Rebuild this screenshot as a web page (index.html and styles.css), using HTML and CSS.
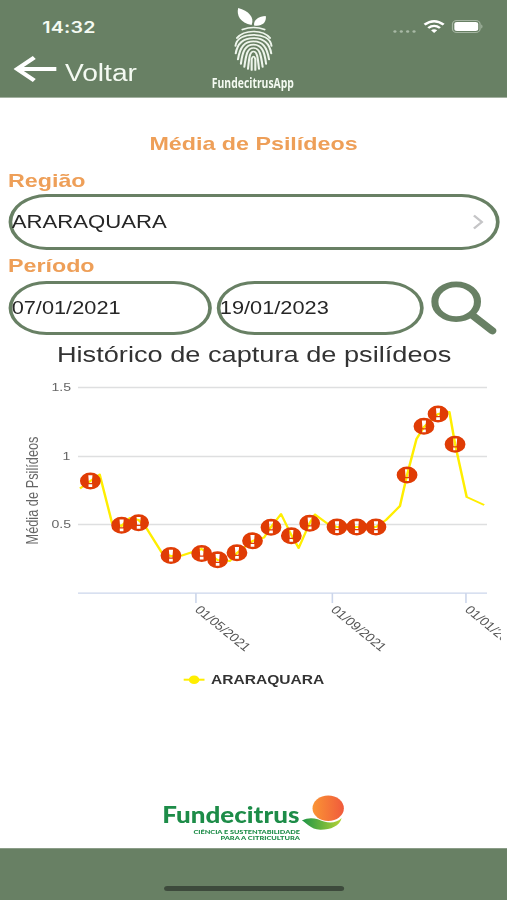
FILE: index.html
```
<!DOCTYPE html>
<html lang="pt-BR">
<head>
    <meta charset="UTF-8">
    <meta name="viewport" content="width=device-width, initial-scale=1.0">
    <title>Média de Psilídeos</title>
    <link rel="stylesheet" href="styles.css">
</head>
<body>
    <div class="screen">
        <header>
            <div class="header-left">
                <div class="time">14:32</div>
                <a href="#" class="back-button">
                    <svg width="36" height="28" viewBox="0 0 36 28">
                        <path d="M35 14H3M17 2.5L3 14l14 11.5" fill="none" stroke="#fff" stroke-width="3.8"/>
                    </svg>
                    <span>Voltar</span>
                </a>
            </div>
            <div class="app-logo">
                <svg width="72" height="89" viewBox="-1 0 72 89">
                    <g fill="#fff">
                        <path d="M33.5 17C24 15 21 7 22.500 0C31 3 36 9 33.500 17Z"/>
                        <path d="M35.500 17.500C35 12 39 8 45 8C46 14 42 19 35.500 17.500Z"/>
                    </g>
                    <g fill="none" stroke="#eef5ec" stroke-width="1.700" stroke-linecap="round">
                        <path d="M26 21.500Q35 17.500 44 21.500"/>
                        <path d="M21.500 30Q26 23.500 35 23.500T48.500 30"/>
                        <path d="M20.300 38C21 30 28 26.800 35 26.800S49 30 49.700 38"/>
                        <path d="M20.500 45.500C22 34 28 30.100 35 30.100S48 34 49.500 45.500"/>
                        <path d="M22.300 51.500C24 38 28 33.400 35 33.400S46 38 47.700 51.500"/>
                        <path d="M24.700 56C26 43 28.500 36.700 35 36.700S44 43 45.300 56"/>
                        <path d="M27.500 59C29 46 30 40 35 40S41 46 42.500 59"/>
                        <path d="M30.500 61C31.500 49 32 43.500 35 43.500S38.500 49 39.500 61"/>
                        <path d="M33.500 62V51Q35 46 36.500 51V62"/>
                    </g>
                    <text x="1" y="80.500" textLength="67" lengthAdjust="spacingAndGlyphs" class="app-name">FundecitrusApp</text>
                </svg>
            </div>
            <div class="status-icons">
                <svg width="74" height="18" viewBox="0 0 74 18">
                    <g fill="#a9b9a6">
                        <circle cx="2.500" cy="13.500" r="1.300"/>
                        <circle cx="7.700" cy="13.500" r="1.300"/>
                        <circle cx="12.900" cy="13.500" r="1.300"/>
                        <circle cx="18.100" cy="13.500" r="1.300"/>
                    </g>
                    <g fill="none" stroke="#fff" stroke-width="2.300">
                        <path d="M26.700 6.700Q34.500 -.2 42.300 6.700"/>
                        <path d="M29.700 10Q34.500 5.800 39.300 10"/>
                    </g>
                    <path d="M32 12.200Q34.500 10.200 37 12.200L34.500 15Z" fill="#fff"/>
                    <rect x="49.500" y="2.500" width="22.500" height="12" rx="3.500" fill="none" stroke="#a5b5a2"/>
                    <rect x="51" y="4" width="19.500" height="9" rx="2.200" fill="#fff"/>
                    <path d="M73 6.500v4q1.300-.7 1.300-2t-1.300-2" fill="#a5b5a2"/>
                </svg>
            </div>
        </header>

        <main>
            <h1>Média de Psilídeos</h1>

            <div class="label">Região</div>
            <div class="field region">
                <span>ARARAQUARA</span>
                <svg width="9" height="16" viewBox="0 0 9 16">
                    <path d="M1 1.500L7.500 8L1 14.500" fill="none" stroke="#c5c5c7" stroke-width="2"/>
                </svg>
            </div>

            <div class="label period-label">Período</div>
            <div class="period">
                <div class="field">07/01/2021</div>
                <div class="field end-date">19/01/2023</div>
                <svg width="54" height="54" viewBox="0 0 54 54">
                    <circle cx="20.500" cy="20.700" r="17.400" fill="none" stroke="#688064" stroke-width="5.800"/>
                    <path d="M34 34.500L50 49.800" stroke="#688064" stroke-width="6.800" stroke-linecap="round"/>
                </svg>
            </div>

            <svg class="chart" width="408.500" height="365" viewBox="0 335 408.500 365">
                <defs>
                    <!-- alert marker, the exclamation mark is cut out -->
                    <path id="alert" fill="#e03c05" fill-rule="evenodd" d="M-8.500 0a8.500 8.500 0 1 0 17 0a8.500 8.500 0 1 0 -17 0ZM-1.700 -5.800H1.700L1.200 2H-1.200ZM-1.500 3.300H1.500V6H-1.500Z"/>
                </defs>

                <text class="chart-title" x="46.500" y="362.500" textLength="322" lengthAdjust="spacingAndGlyphs">Histórico de captura de psilídeos</text>

                <g stroke="#dedfe0" stroke-width="1.500">
                    <path d="M63.700 387.500H397.700M63.700 456.500H397.700M63.700 524.500H397.700"/>
                </g>
                <path d="M63.700 593.200H397.700M160 593V603M271.400 593V603M380.500 593V603" stroke="#ccd6eb" stroke-width="1.300"/>

                <g class="axis" text-anchor="end">
                    <text x="58" y="391.500">1.5</text>
                    <text x="57.500" y="460">1</text>
                    <text x="58" y="528">0.5</text>
                </g>
                <text class="axis-title" transform="translate(31 544.500) rotate(-90)" textLength="108" lengthAdjust="spacingAndGlyphs">Média de Psilídeos</text>
                <g class="dates">
                    <text transform="translate(158.500 610.500) rotate(45)">01/05/2021</text>
                    <text transform="translate(269.500 610.500) rotate(45)">01/09/2021</text>
                    <text transform="translate(379 610.500) rotate(45)">01/01/2022</text>
                </g>

                <polyline fill="none" stroke="#ffee00" stroke-width="2" stroke-linejoin="round" points="65.300,488.500 73.800,481 81.400,474.500 91.500,523 99.300,526 106,518 113.200,520 119,527 132.300,553 139.600,556 148.600,555.500 164.700,549 177.700,560 187.800,561 193.500,553 206.200,541 215.600,537.500 221.300,527 229.500,514 237.900,535 243.900,548 252.900,523 257.200,514.500 267.800,524 275.200,527 291.300,527 307,527 315.200,520 326.600,506 332.400,475 340.100,439 346.200,427 357.700,414 367,412 371.600,444 381.100,497 395.400,505"/>
                <use href="#alert" x="73.800" y="481"/>
                <use href="#alert" x="99.300" y="525.300"/>
                <use href="#alert" x="113.200" y="522.800"/>
                <use href="#alert" x="139.600" y="555.500"/>
                <use href="#alert" x="164.700" y="553.500"/>
                <use href="#alert" x="177.700" y="559.800"/>
                <use href="#alert" x="193.500" y="552.800"/>
                <use href="#alert" x="206.200" y="540.800"/>
                <use href="#alert" x="221.300" y="527.200"/>
                <use href="#alert" x="237.900" y="535.800"/>
                <use href="#alert" x="252.900" y="523.300"/>
                <use href="#alert" x="275.200" y="527"/>
                <use href="#alert" x="291.300" y="527"/>
                <use href="#alert" x="307" y="527"/>
                <use href="#alert" x="332.400" y="475"/>
                <use href="#alert" x="346.200" y="426.200"/>
                <use href="#alert" x="357.700" y="414"/>
                <use href="#alert" x="371.600" y="444.200"/>

                <path d="M150 679.700H167" stroke="#ffee00" stroke-width="2"/>
                <circle cx="158.500" cy="679.700" r="4.300" fill="#ffee00"/>
                <text class="legend" x="172.300" y="684.300" textLength="92.500" lengthAdjust="spacingAndGlyphs">ARARAQUARA</text>
            </svg>

            <svg class="brand" width="150" height="54" viewBox="0 0 150 54">
                <defs>
                    <linearGradient id="orange">
                        <stop offset="0" stop-color="#fa9434"/>
                        <stop offset="1" stop-color="#f05a3c"/>
                    </linearGradient>
                    <linearGradient id="leaf">
                        <stop offset="0" stop-color="#1d9547"/>
                        <stop offset="1" stop-color="#b5d334"/>
                    </linearGradient>
                </defs>
                <text class="brand-name" x="-.5" y="28.800" textLength="112" lengthAdjust="spacingAndGlyphs">Fundecitrus</text>
                <text class="brand-sub" x="25" y="39.800" textLength="87" lengthAdjust="spacingAndGlyphs">CIÊNCIA E SUSTENTABILIDADE</text>
                <text class="brand-sub" x="47" y="46" textLength="65" lengthAdjust="spacingAndGlyphs">PARA A CITRICULTURA</text>
                <circle cx="135" cy="14.300" r="12.800" fill="url(#orange)"/>
                <path d="M113.500 26.500C120.500 22 126.500 25 131.500 27.500C137.500 30 142.500 28 146 24C144.500 32 136.500 36 128.500 35.800C120.500 35.500 116.500 28 113.500 26.500Z" fill="url(#leaf)"/>
            </svg>
        </main>

        <footer>
            <div class="home-indicator"></div>
        </footer>
    </div>
</body>
</html>
```
FILE: styles.css
```
* {
    margin: 0;
    padding: 0;
    box-sizing: border-box;
}
body {
    font-family: "Liberation Sans", Arial, sans-serif;
    background: #fff;
    color: #262626;
    overflow: hidden;
}
.screen {
    width: 414px;
    height: 900px;
    display: flex;
    flex-direction: column;
    transform: scaleX(1.2246);
    transform-origin: 0 0;
}
header {
    height: 98px;
    display: grid;
    grid-template-columns: 1fr auto 1fr;
    background: #688064;
    border-bottom: 1px solid #a3b1a0;
    color: #fff;
}
.header-left {
    padding: 17px 0 0 11px;
}
.time {
    padding-left: 23.5px;
    font-family: Inter, sans-serif;
    font-size: 16px;
    font-weight: 600;
    line-height: 20px;
    letter-spacing: 0.2px;
    color: #f4faf2;
}
.back-button {
    margin-top: 17px;
    display: flex;
    align-items: center;
    gap: 6px;
    color: #f4faf2;
    font-size: 23px;
    line-height: 30px;
    text-decoration: none;
}
.back-button svg {
    margin-top: -5px;
}
.back-button span {
    padding-top: 4px;
}
.app-logo {
    padding-top: 8px;
}
.app-name {
    font-family: "Open Sans", sans-serif;
    font-size: 13.500px;
    font-weight: 700;
    fill: #f4faf2;
}
.status-icons {
    padding: 18px 20px 0 0;
    text-align: right;
}
main {
    flex: 1;
    display: flex;
    flex-direction: column;
    padding-top: 34px;
}
h1,
.label {
    font-size: 19px;
    font-weight: bold;
    line-height: 24px;
    color: #ee9f58;
}
h1 {
    text-align: center;
    margin-bottom: 13px;
}
.label {
    padding-left: 6.500px;
}
.field {
    height: 54px;
    display: flex;
    align-items: center;
    border: 3px solid #688064;
    border-radius: 31px / 27px;
    font-size: 17.800px;
    white-space: nowrap;
}
.region {
    height: 56px;
    margin: 1px 6px 0 6.500px;
    border-radius: 31px / 28px;
    justify-content: space-between;
    padding-right: 10px;
    font-size: 18.100px;
}
.period-label {
    margin-top: 4px;
}
.period {
    display: flex;
    gap: 4px;
    margin-top: 3px;
    padding-left: 6.500px;
}
.period .field {
    width: 166px;
}
.period .end-date {
    width: 169px;
}
.period svg {
    margin-left: 2px;
}
.chart-title {
    font-size: 22px;
    fill: #333;
}
.axis {
    font-size: 11.500px;
    fill: #666;
}
.axis-title {
    font-size: 13px;
    fill: #666;
}
.dates {
    font-size: 11.700px;
    fill: #555;
}
.legend {
    font-size: 13px;
    font-weight: bold;
    fill: #333;
}
.brand {
    margin: auto 0 0 132.500px;
}
.brand-name {
    font-family: Lato, sans-serif;
    font-size: 22px;
    font-weight: 900;
    fill: #1d8c48;
}
.brand-sub {
    font-family: Lato, sans-serif;
    font-size: 5.500px;
    font-weight: 900;
    fill: #1d8c48;
}
footer {
    height: 52px;
    display: flex;
    align-items: flex-end;
    justify-content: center;
    padding-bottom: 9px;
    background: #688064;
    border-top: 1px solid #8b9d88;
}
.home-indicator {
    width: 147px;
    height: 5px;
    border-radius: 3px;
    background: #3d4a3c;
}
```
